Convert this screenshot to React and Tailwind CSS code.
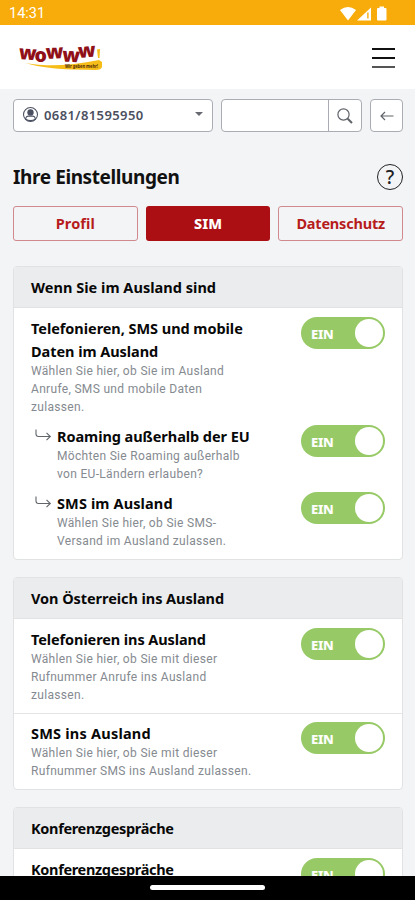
import React, { useState } from 'react';

const sections = [
    {
        title: 'Wenn Sie im Ausland sind',
        tracking: 'tracking-[0.03px]',
        rows: [
            { tracking: 'tracking-[-0.05px]', title: ['Telefonieren, SMS und mobile', 'Daten im Ausland'], text: ['Wählen Sie hier, ob Sie im Ausland', 'Anrufe, SMS und mobile Daten', 'zulassen.'] },
            { nested: true, tracking: 'tracking-[-0.06px]', title: ['Roaming außerhalb der EU'], text: ['Möchten Sie Roaming außerhalb', 'von EU-Ländern erlauben?'] },
            { nested: true, tracking: 'tracking-[0.12px]', title: ['SMS im Ausland'], text: ['Wählen Sie hier, ob Sie SMS-', 'Versand im Ausland zulassen.'] },
        ],
    },
    {
        title: 'Von Österreich ins Ausland',
        tracking: 'tracking-[-0.06px]',
        rows: [
            { tracking: 'tracking-[-0.1px]', title: ['Telefonieren ins Ausland'], text: ['Wählen Sie hier, ob Sie mit dieser', 'Rufnummer Anrufe ins Ausland', 'zulassen.'] },
            { divider: true, tracking: 'tracking-[0.22px]', title: ['SMS ins Ausland'], text: ['Wählen Sie hier, ob Sie mit dieser', 'Rufnummer SMS ins Ausland zulassen.'] },
        ],
    },
    {
        title: 'Konferenzgespräche',
        tracking: 'tracking-[-0.33px]',
        rows: [{ tracking: 'tracking-[-0.33px]', title: ['Konferenzgespräche'], text: [] }],
    },
];

const Logo = () => (
    <svg className="overflow-visible" width="86" height="32" viewBox="0 0 86 32">
        <path d="M2 20.5 C20 26 50 25.5 81 19 L84 21 V26 Q83 29 78 29 L55 28.5 C35 28 15 25 2 20.5Z" fill="#f6bd18" />
        <text
            y="18 21 18 20.5 17"
            x="0.5 16.5 28 44 60.5"
            rotate="4 0 -3 3 -5"
            fontSize="19.5"
            fill="#8f1018"
            fontFamily="Open Sans, sans-serif"
            fontWeight="800"
        >
            wowww
        </text>
        <path d="M79 8.5 L82 8 L81.5 17 L80 17Z" fill="#f6bd18" />
        <text x="47" y="27.4" fontSize="4.8" fontWeight="700" fontFamily="Open Sans, sans-serif" fill="#4c2808" textLength="33" lengthAdjust="spacingAndGlyphs">Wir geben mehr!</text>
    </svg>
);

const StatusIcons = () => (
    <svg width="50" height="16" viewBox="0 0 50 16" fill="#fff">
        <path d="M0 4 Q8 -2 16 4 L8 14.5Z" />
        <path d="M17 14.5 L31 1.5 V14.5Z" />
        <path d="M27.2 6.5 H28.6 V12.5 H27.2Z" fill="#f7ac0b" />
        <path d="M37 3 Q37 2 38 2 H39.5 V0.5 H44 V2 H45.5 Q46.5 2 46.5 3 V13.5 Q46.5 14.5 45.5 14.5 H38 Q37 14.5 37 13.5Z" />
    </svg>
);

const Switch = () => {
    const [on, setOn] = useState(true);

    return (
        <button
            onClick={() => setOn(!on)}
            className="flex h-8 w-[84px] shrink-0 items-center justify-between rounded-full bg-[#97ca66] pl-[10px] pr-[2px]"
        >
            <span className="pt-[4px] font-['Noto_Sans',sans-serif] text-[13px] font-extrabold tracking-[-0.3px] text-white">{on ? 'EIN' : 'AUS'}</span>
            <span className="size-7 rounded-full bg-white"></span>
        </button>
    );
};

const Row = ({ row }) => (
    <div className={row.divider ? 'mt-[9px] flex border-t border-[#e2e4e6] px-[17px] pt-[8px]' : 'flex px-[17px] pt-[9px]'}>
        {row.nested && (
            <svg className="mt-1 ml-1 mr-[5px] shrink-0" width="17" height="14" viewBox="0 0 17 14" fill="none" stroke="#62666b" strokeWidth="1.1">
                <path d="M1 0.5 V5 Q1 7.5 3.5 7.5 H15 M11.5 3.8 L15.3 7.5 L11.5 11.2" />
            </svg>
        )}
        <div className="grow whitespace-nowrap">
            <h3 className={`text-[14.5px] leading-[23px] font-bold text-[#080808] ${row.tracking}`}>
                {row.title.map((line) => <span key={line} className="block">{line}</span>)}
            </h3>
            <p className="-mt-px font-[Roboto,sans-serif] text-[12px] leading-[18px] tracking-[0.32px] text-[#858a90]">
                {row.text.map((line) => <span key={line} className="block">{line}</span>)}
            </p>
        </div>
        <Switch />
    </div>
);

const App = () => {
    return (
        <div className="flex h-[900px] w-[415px] flex-col overflow-hidden bg-[#f3f4f6] font-['Noto_Sans',sans-serif]">
            <div className="flex h-[25px] shrink-0 items-center justify-between bg-[#f7ac0b] pl-[9px] pr-[25px] pt-[2px]">
                <span className="pt-px font-[Roboto,sans-serif] text-[14.5px] text-white">14:31</span>
                <StatusIcons />
            </div>

            <header className="flex h-[64px] shrink-0 items-center justify-between bg-white pr-5 pl-[18px]">
                <Logo />
                <div className="flex w-[23px] flex-col gap-[7px] pt-px">
                    <span className="h-[2px] bg-[#111]"></span>
                    <span className="h-[2px] bg-[#111]"></span>
                    <span className="h-[2px] bg-[#555]"></span>
                </div>
            </header>

            <main className="min-h-0 grow overflow-hidden px-3 pt-[10px]">
                <div className="flex h-[33px] gap-2 pl-px">
                    <div className="flex w-[200px] items-center rounded-[4px] border border-[#a9acb2] bg-white pr-[9px] pl-2">
                        <svg className="mb-[3px]" width="17" height="17" viewBox="0 0 18 18" fill="none" stroke="#4b5060" strokeWidth="1.1">
                            <circle cx="9" cy="9" r="7.4" />
                            <circle cx="9" cy="6.8" r="2.8" fill="#4b5060" />
                            <path d="M3.8 14 Q4 11 7 10.7 H11 Q14 11 14.2 14 Q9 17 3.8 14" />
                        </svg>
                        <span className="ml-[5px] text-[13px] font-semibold tracking-[0.4px] text-[#4b5060]">0681/81595950</span>
                        <span className="mb-[3px] ml-auto border-x-4 border-t-4 border-x-transparent border-t-[#666a70]"></span>
                    </div>
                    <div className="flex w-[141px] rounded-[4px] border border-[#a9acb2] bg-white">
                        <div className="w-[107px] border-r border-[#a9acb2]"></div>
                        <div className="flex grow items-center justify-center">
                            <svg width="16" height="16" viewBox="0 0 16 16" fill="none" stroke="#606469">
                                <circle cx="6.5" cy="6.5" r="5.6" strokeWidth="1.2" />
                                <path d="M10.7 10.7 L15 15" strokeWidth="2" />
                            </svg>
                        </div>
                    </div>
                    <div className="flex w-[33px] items-center justify-center rounded-[4px] border border-[#a9acb2] bg-white">
                        <svg width="14" height="10" viewBox="0 0 14 10" fill="none" stroke="#606469" strokeWidth="1.2">
                            <path d="M13.5 5 H1 M5 1 L1 5 L5 9" />
                        </svg>
                    </div>
                </div>

                <div className="mt-[31px] flex h-7 items-center justify-between pl-px">
                    <h1 className="text-[19px] font-bold tracking-[-0.4px] text-[#111]">Ihre Einstellungen</h1>
                    <div className="flex size-[26px] items-center justify-center rounded-full border-[1.5px] border-[#222] text-[19px] font-medium text-[#222]">?</div>
                </div>

                <div className="mt-[15px] flex h-[35px] gap-2 pl-px text-[14.5px] font-bold text-[#b71c1c]">
                    <button className="w-[125px] rounded-[3px] border border-[#d0898e] tracking-[0.1px]">Profil</button>
                    <button className="w-[125px] rounded-[3px] bg-[#ab0f13] font-extrabold text-white">SIM</button>
                    <button className="w-[125px] rounded-[3px] border border-[#d0898e] tracking-[-0.2px]">Datenschutz</button>
                </div>

                <div className="mt-[25px] flex flex-col gap-[17px] pl-px">
                    {sections.map((section) => (
                        <section key={section.title} className="overflow-hidden rounded-[4px] border border-[#e0e2e4] bg-white pb-[9px]">
                            <h2 className={`flex h-[41px] items-center border-b border-[#e0e2e4] bg-[#ebecee] pt-px pl-[17px] text-[14.5px] font-bold text-[#080808] ${section.tracking}`}>
                                {section.title}
                            </h2>
                            {section.rows.map((row) => <Row key={row.title[0]} row={row} />)}
                        </section>
                    ))}
                </div>
            </main>

            <div className="flex h-6 shrink-0 items-center justify-center bg-black">
                <span className="mb-px h-[5px] w-[115px] rounded-full bg-white"></span>
            </div>
        </div>
    );
};

export default App;
